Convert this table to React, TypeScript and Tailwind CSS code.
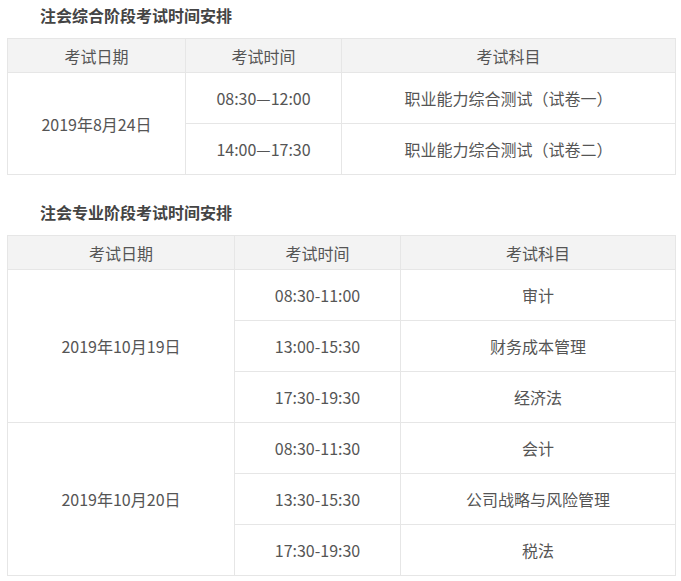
const font = { fontFamily: '"Microsoft YaHei", "Noto Sans CJK SC", "Noto Sans", sans-serif' };

interface ISlot {
  time: string;
  subject: string;
}

interface IDay {
  date: string;
  slots: ISlot[];
}

const comprehensive: IDay[] = [
  {
    date: "2019年8月24日",
    slots: [
      { time: "08:30—12:00", subject: "职业能力综合测试（试卷一）" },
      { time: "14:00—17:30", subject: "职业能力综合测试（试卷二）" },
    ],
  },
];

const professional: IDay[] = [
  {
    date: "2019年10月19日",
    slots: [
      { time: "08:30-11:00", subject: "审计" },
      { time: "13:00-15:30", subject: "财务成本管理" },
      { time: "17:30-19:30", subject: "经济法" },
    ],
  },
  {
    date: "2019年10月20日",
    slots: [
      { time: "08:30-11:30", subject: "会计" },
      { time: "13:30-15:30", subject: "公司战略与风险管理" },
      { time: "17:30-19:30", subject: "税法" },
    ],
  },
];

function Schedule({ title, days, cols, className }: { title: string; days: IDay[]; cols: number[]; className?: string }) {
  const cell = "border border-[#e6e6e6] text-center align-middle";
  return (
    <div className={className}>
      <h2 className="h-[30px] leading-[30px] pl-[33px] mb-[8px] text-[16px] font-bold text-[#444]">{title}</h2>
      <table className="border-collapse table-fixed w-[668px] text-[16px] text-[#555]">
        <colgroup>
          {cols.map((w, i) => (
            <col key={i} style={{ width: w }} />
          ))}
        </colgroup>
        <thead>
          <tr className="bg-[#f3f3f3]">
            <th className={`${cell} h-[34px] font-normal`}>考试日期</th>
            <th className={`${cell} h-[34px] font-normal`}>考试时间</th>
            <th className={`${cell} h-[34px] font-normal`}>考试科目</th>
          </tr>
        </thead>
        <tbody>
          {days.map((day) =>
            day.slots.map((slot, i) => (
              <tr key={day.date + slot.time}>
                {i === 0 && (
                  <td rowSpan={day.slots.length} className={cell}>
                    {day.date}
                  </td>
                )}
                <td className={`${cell} h-[51px]`}>{slot.time}</td>
                <td className={`${cell} h-[51px]`}>{slot.subject}</td>
              </tr>
            ))
          )}
        </tbody>
      </table>
    </div>
  );
}

export default function App() {
  return (
    <div className="bg-white w-[681px] h-[581px] px-[7px]" style={font}>
      <Schedule title="注会综合阶段考试时间安排" days={comprehensive} cols={[178, 156, 334]} />
      <Schedule title="注会专业阶段考试时间安排" days={professional} cols={[227, 166, 275]} className="mt-[22px]" />
    </div>
  );
}
